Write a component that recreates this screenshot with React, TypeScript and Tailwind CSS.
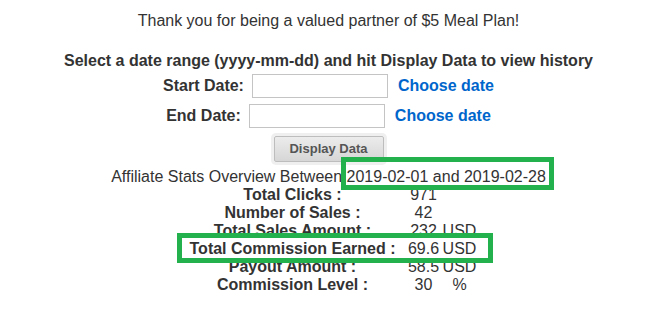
import React from 'react';

const stats = [
  { label: 'Total Clicks :', value: '971', unit: '' },
  { label: 'Number of Sales :', value: '42', unit: '' },
  { label: 'Total Sales Amount :', value: '232', unit: 'USD' },
  { label: 'Total Commission Earned :', value: '69.6', unit: 'USD' },
  { label: 'Payout Amount :', value: '58.5', unit: 'USD' },
  { label: 'Commission Level :', value: '30', unit: '%' },
];

const DateRow = ({ label }: { label: string }) => (
  <div className="flex items-center justify-center">
    <span className="font-bold">{label}</span>
    <input
      type="text"
      className="ml-2 h-[24px] w-[136px] border border-[#c4c4c4] bg-white outline-none"
    />
    <a href="#" className="ml-[10px] font-bold text-[#0066cc]">
      Choose date
    </a>
  </div>
);

const App = () => {
  return (
    <main className="relative h-[318px] w-full overflow-hidden bg-white text-center text-[16px] leading-[18px] text-[#333] font-['Liberation_Sans',Arial,sans-serif]">
      <p className="pt-[12px]">Thank you for being a valued partner of $5 Meal Plan!</p>

      <p className="mt-[22px] font-bold">Select a date range (yyyy-mm-dd) and hit Display Data to view history</p>

      <div className="mt-[4px]">
        <DateRow label="Start Date:" />
      </div>
      <div className="mt-[6px]">
        <DateRow label="End Date:" />
      </div>

      <div className="mt-[8px] flex justify-center">
        <button className="h-[26px] w-[110px] rounded-[2px] border border-[#bdbdbd] bg-gradient-to-b from-[#ececec] to-[#d6d6d6] text-[13px] font-bold text-[#555] shadow-[0_0_0_3px_#efefef]">
          Display Data
        </button>
      </div>

      <p className="mt-[6px]">Affiliate Stats Overview Between 2019-02-01 and 2019-02-28</p>

      <div className="flex flex-col items-center">
        {stats.map((s) => (
          <div key={s.label} className="flex">
            <span className="w-[226px] font-bold">{s.label}</span>
            <span className="w-[36px]">{s.value}</span>
            <span className="w-[36px]">{s.unit}</span>
          </div>
        ))}
      </div>

      {/* green highlight boxes drawn over the screenshot */}
      <div className="absolute left-[341px] top-[157px] h-[33px] w-[213px] border-[5px] border-[#22b14c]" />
      <div className="absolute left-[177px] top-[233px] h-[30px] w-[316px] border-[5px] border-[#22b14c]" />
    </main>
  );
};

export default App;
